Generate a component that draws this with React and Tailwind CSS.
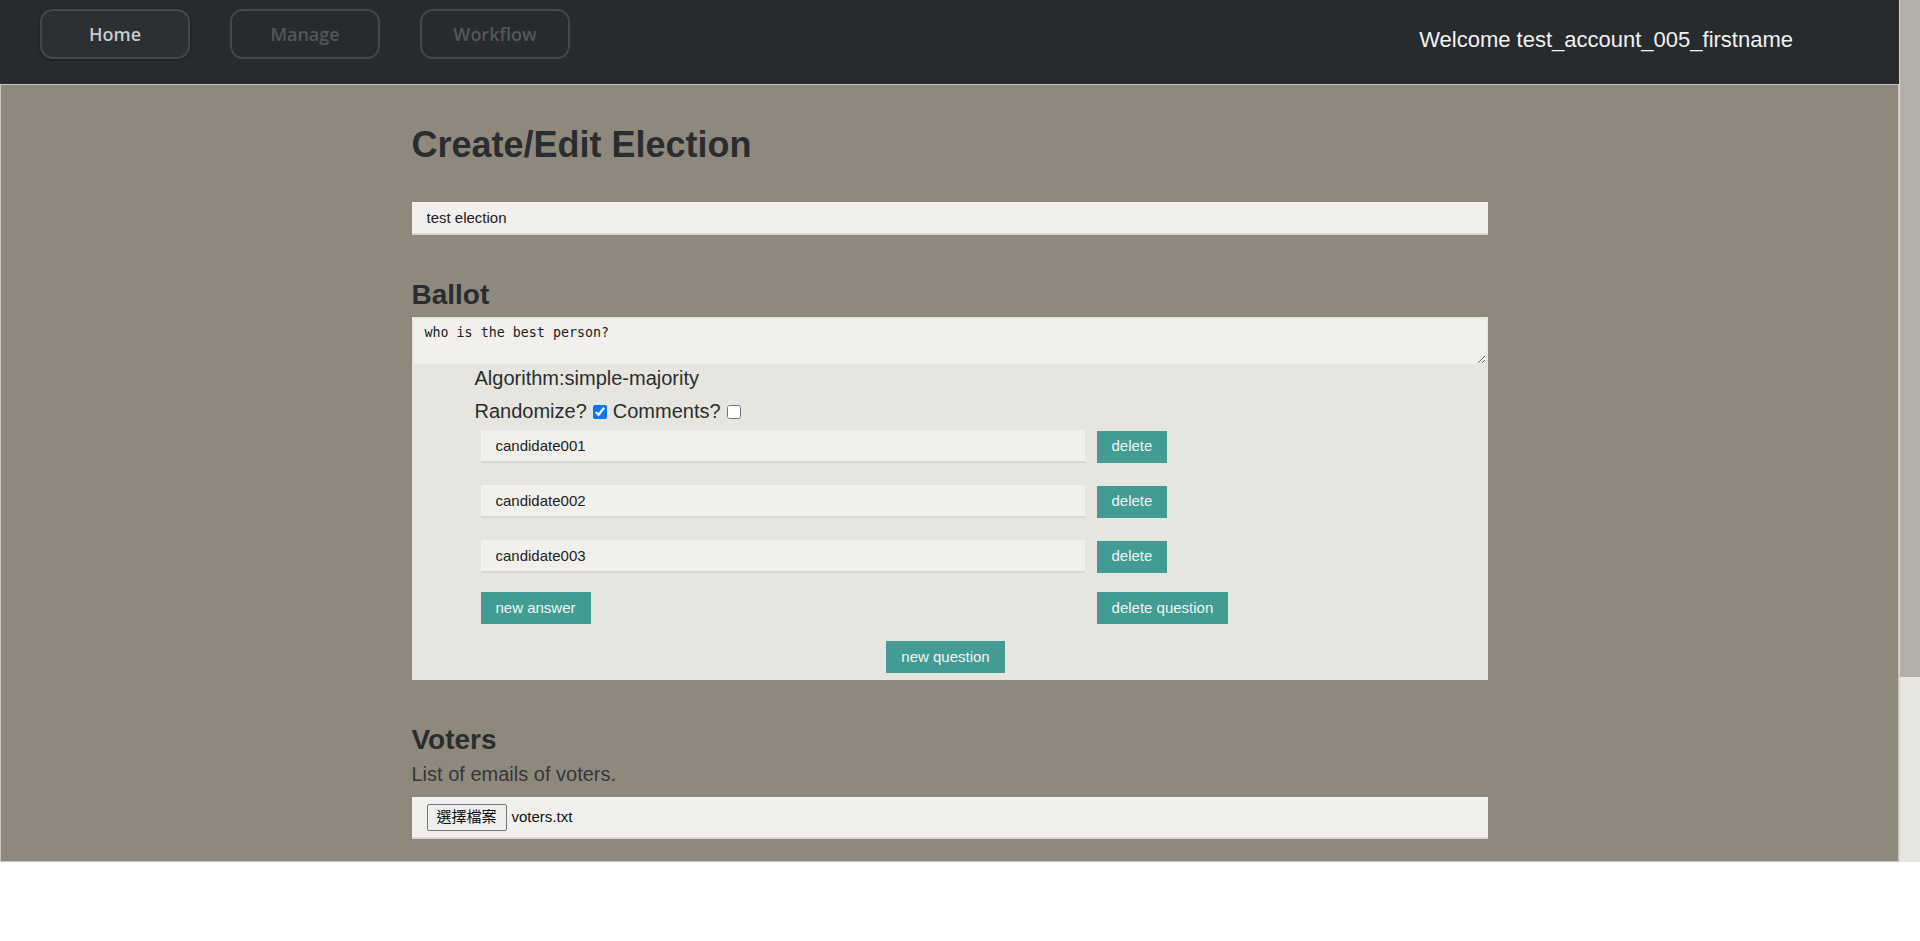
import { useState } from "react";

const NavButton = ({ label, active }) => (
  <button
    type="button"
    className={
      "w-[150px] h-[50px] rounded-[13px] border-2 border-[#44484c] text-[18px] font-semibold font-['Open_Sans',sans-serif] " +
      (active ? "bg-[#2c3033] text-[#c9cacb] shadow-[0_1px_3px_rgba(0,0,0,0.35)]" : "bg-transparent text-[#53575a]")
    }
  >
    {label}
  </button>
);

const AnswerRow = ({ value }) => (
  <div className="flex items-center gap-[12px]">
    <input
      type="text"
      defaultValue={value}
      className="w-[604px] h-[33px] bg-[#f1f0ed] border-b-2 border-[#d8d6d1] px-[15px] text-[15px] text-[#222] outline-none"
    />
    <button type="button" className="h-[32px] px-[15px] bg-[#439c94] text-[#eef6f3] text-[15px]">
      delete
    </button>
  </div>
);

export default function App() {
  // ballot state
  const [answers] = useState(["candidate001", "candidate002", "candidate003"]);

  return (
    <div className="flex w-[1920px] h-[862px] font-['Liberation_Sans',Arial,sans-serif]">
      <div className="flex flex-col w-[1899px] h-full">
        {/* Top bar */}
        <nav className="h-[84px] shrink-0 bg-[#272b2e] flex items-center pl-[40px] pb-[16px]">
          <div className="flex items-center gap-[40px]">
            <NavButton label="Home" active />
            <NavButton label="Manage" />
            <NavButton label="Workflow" />
          </div>
          <div className="ml-auto mr-[106px] text-[22px] text-[#f2f2f2] pt-[10px]">
            Welcome test_account_005_firstname
          </div>
        </nav>

        {/* Main */}
        <main className="flex-1 bg-[#8f897d] border border-[#cac6be] overflow-hidden">
          <div className="w-[1076px] mx-auto pt-[39px] text-[#2a2d30]">
            <h1 className="text-[36px] leading-[41px] font-bold">Create/Edit Election</h1>

            <input
              type="text"
              defaultValue="test election"
              className="mt-[37px] block w-full h-[33px] bg-[#f1f0ed] border-b-2 border-[#d8d6d1] px-[15px] text-[15px] text-[#222] outline-none"
            />

            <h2 className="mt-[44px] text-[28px] leading-[32px] font-bold">Ballot</h2>

            <div className="mt-[6px] bg-[#e6e5e0] pb-[7px]">
              <textarea
                readOnly
                defaultValue="who is the best person?"
                className="block w-full h-[49px] bg-[#f1f0ed] border-2 border-[#e8e6e1] px-[11px] py-[4px] text-[13.33px] text-[#222] font-['DejaVu_Sans_Mono',monospace] outline-none"
              />

              <div className="pl-[63px] pt-[1px] text-[20px] leading-[23px]">
                <div>Algorithm:simple-majority</div>
                <div className="mt-[10px] flex items-center">
                  <span>Randomize?</span>
                  <input type="checkbox" defaultChecked className="mx-[6px] w-[14px] h-[14px]" />
                  <span>Comments?</span>
                  <input type="checkbox" className="ml-[6px] w-[14px] h-[14px]" />
                </div>
              </div>

              <div className="pl-[69px] mt-[7px]">
                <div className="flex flex-col gap-[22px]">
                  {answers.map((a) => (
                    <AnswerRow key={a} value={a} />
                  ))}
                </div>
                <div className="mt-[19px] flex items-center">
                  <button type="button" className="h-[32px] px-[15px] bg-[#439c94] text-[#eef6f3] text-[15px]">
                    new answer
                  </button>
                  <button type="button" className="ml-[506px] h-[32px] px-[15px] bg-[#439c94] text-[#eef6f3] text-[15px]">
                    delete question
                  </button>
                </div>
              </div>

              <div className="mt-[17px] flex justify-center pr-[8px]">
                <button type="button" className="h-[32px] px-[15px] bg-[#439c94] text-[#eef6f3] text-[15px]">
                  new question
                </button>
              </div>
            </div>

            <h2 className="mt-[44px] text-[28px] leading-[32px] font-bold">Voters</h2>
            <p className="mt-[7px] text-[20px] leading-[23px] text-[#34373a]">List of emails of voters.</p>

            <div className="mt-[11px] h-[42px] bg-[#f1f0ed] border-b-2 border-[#d8d6d1] flex items-center pl-[15px]">
              <span className="h-[27px] px-[9px] flex items-center border border-[#767676] rounded-[2px] bg-[#efefef] text-[15px] text-[#111] font-['Liberation_Sans','Noto_Sans_CJK_TC',sans-serif]">
                選擇檔案
              </span>
              <span className="ml-[5px] text-[15px] text-[#111]">voters.txt</span>
            </div>
          </div>
        </main>
      </div>

      {/* Scrollbar */}
      <div className="w-[21px] h-full flex flex-col border-l border-[#d9d6d0]">
        <div className="h-[677px] bg-[#b3afa8]" />
        <div className="flex-1 bg-[#e6e5e0]" />
      </div>
    </div>
  );
}
